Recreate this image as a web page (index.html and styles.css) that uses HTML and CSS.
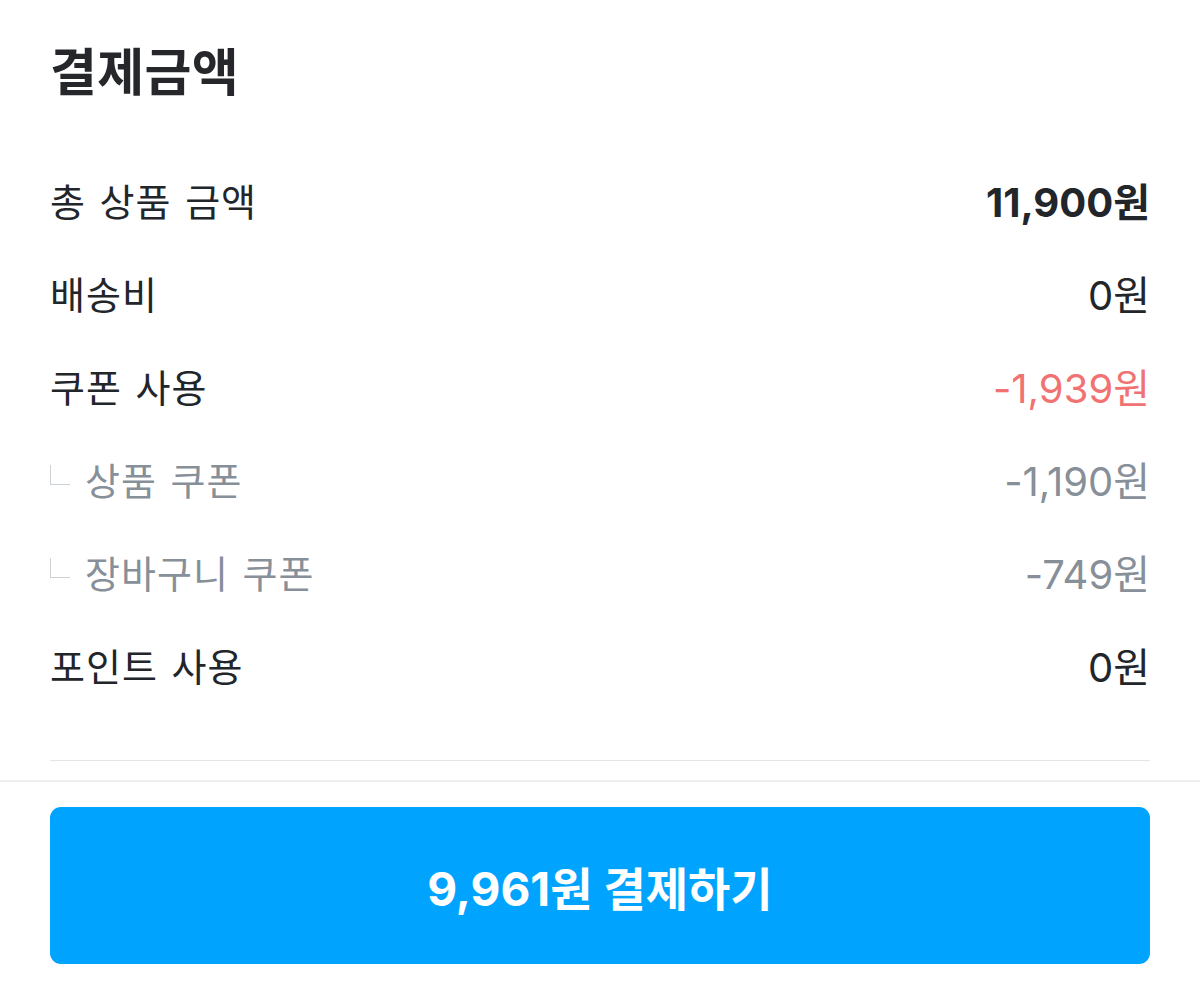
FILE: index.html
```html
<!DOCTYPE html>
<html lang="ko">
<head>
<meta charset="utf-8">
<title>결제금액</title>
<link rel="stylesheet" href="styles.css">
</head>
<body>
<div class="page">
  <section class="summary">
    <h1 class="title">결제금액</h1>
    <div class="rows">
      <div class="row"><span class="label">총 상품 금액</span><span class="value strong">11,900원</span></div>
      <div class="row"><span class="label">배송비</span><span class="value">0원</span></div>
      <div class="row"><span class="label">쿠폰 사용</span><span class="value red">-1,939원</span></div>
      <div class="row sub"><span class="label"><i class="mark"></i>상품 쿠폰</span><span class="value">-1,190원</span></div>
      <div class="row sub"><span class="label"><i class="mark"></i>장바구니 쿠폰</span><span class="value">-749원</span></div>
      <div class="row"><span class="label">포인트 사용</span><span class="value">0원</span></div>
    </div>
    <div class="divider"></div>
  </section>
  <footer class="footer">
    <button class="pay">9,961원 결제하기</button>
  </footer>
</div>
</body>
</html>
```
FILE: styles.css
```css
* { box-sizing: border-box; }
html, body { margin: 0; padding: 0; background: #fff; }
body {
  font-family: "Inter", "Noto Sans CJK KR", sans-serif;
  color: #222529;
  width: 1200px;
  height: 987px;
  overflow: hidden;
}
.summary { padding: 34px 50px 0; }
.title {
  margin: 0;
  font-size: 51px;
  line-height: 70px;
  font-weight: 700;
  color: #25272b;
  font-family: "Noto Sans CJK KR", sans-serif;
  letter-spacing: 0.3px;
}
.rows { margin-top: 49px; display: flex; flex-direction: column; }
.row {
  height: 93px;
  display: flex;
  align-items: center;
  justify-content: space-between;
}
.label {
  font-family: "Noto Sans CJK KR", sans-serif;
  font-size: 38px;
  letter-spacing: 1px;
  word-spacing: 2px;
  display: flex;
  align-items: center;
}
.value { font-size: 40px; letter-spacing: 0; }
.strong { font-weight: 700; }
.red { color: #f07272; }
.sub { color: #878f98; }
.mark {
  width: 20px;
  height: 20px;
  border-left: 1.5px solid #ccd1d6;
  border-bottom: 1.5px solid #ccd1d6;
  margin: 0 15px 0 0;
  position: relative;
  top: -4px;
}
.divider { margin-top: 49px; height: 1px; background: #e3e5e8; }
.footer { margin-top: 19px; border-top: 2px solid #eceef0; padding: 25px 50px 0; }
.pay {
  width: 100%;
  height: 157px;
  border: 0;
  border-radius: 11px;
  background: #00a4ff;
  color: #fff;
  font-family: "Inter", "Noto Sans CJK KR", sans-serif;
  font-size: 46px;
  font-weight: 700;
  letter-spacing: 0;
  display: flex;
  align-items: center;
  justify-content: center;
}
```
